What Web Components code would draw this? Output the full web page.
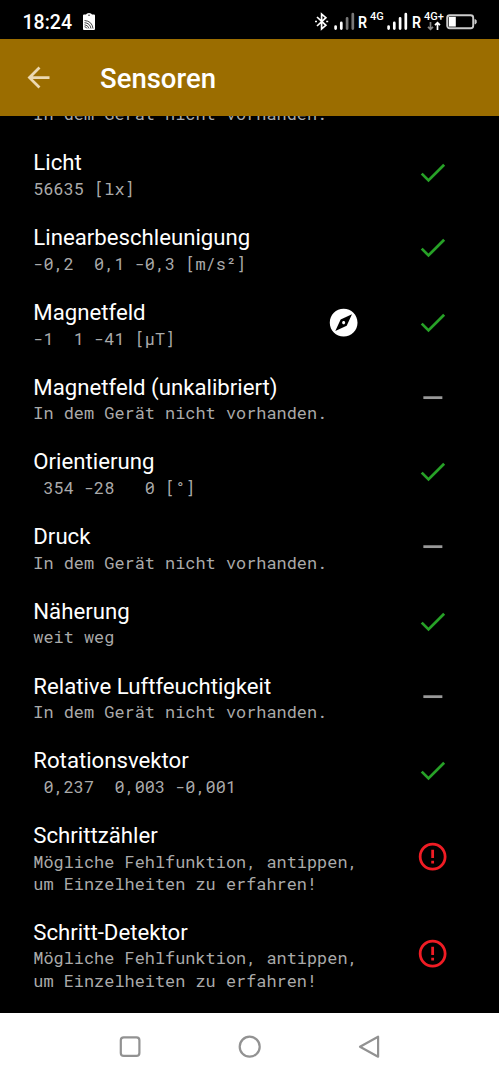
<!DOCTYPE html>
<html lang="de">
<head>
<meta charset="utf-8">
<title>Sensoren</title>
<style>
    body {
        margin: 0;
        background: #000;
        font-family: Roboto, "Open Sans", sans-serif;
        color: #fff;
    }
</style>
</head>
<body>
<sensor-app></sensor-app>

<script>
const signalBars = (dimmed) => `
    <svg class="bars" width="21" height="18" viewBox="0 0 21 18">
        <g stroke-width="2.7" stroke-linecap="round" stroke="#fff">
            <path d="M1.6 14.5V16.6M7.3 10.9V16.6"/>
            <path d="M13.1 6.3V16.6M18.8 2.2V16.6" ${dimmed ? 'stroke="#777"' : ''}/>
        </g>
    </svg>`;

class StatusBar extends HTMLElement {
    constructor() {
        super();
        this.attachShadow({ mode: 'open' });
    }

    connectedCallback() {
        this.shadowRoot.innerHTML = `
            <style>
                :host {
                    display: flex;
                    box-sizing: border-box;
                    height: 39px;
                    padding: 12px 21px 0 22.5px;
                    background: #000;
                    line-height: 1;
                }

                svg { display: block; flex: none; }

                .time {
                    width: 59.5px;
                    font-size: 19.5px;
                    font-weight: 500;
                    line-height: 22px;
                }

                .spacer { flex: 1; }

                .roaming {
                    width: 12px;
                    padding-top: 2px;
                    font-size: 17px;
                    font-weight: 600;
                    transform: scaleX(.84);
                    transform-origin: left;
                }

                .net {
                    display: flex;
                    flex-direction: column;
                    font-size: 11px;
                    font-weight: 500;
                    line-height: 9px;
                }
            </style>
            <span class="time">18:24</span>
            <svg width="14" height="19" viewBox="0 0 14 19">
                <path fill="#fff" d="M2 2.5H4Q4.5 1 7 1T10 2.5H12Q13 2.5 13 3.5V17Q13 18 12 18H2Q1 18 1 17V3.5Q1 2.5 2 2.5Z"/>
                <circle cx="7" cy="3.3" r=".8" fill="#333"/>
                <g fill="none" stroke="#333" stroke-width=".9">
                    <path d="M2.5 8.5Q10 9 11 16.5M2.5 10.7Q8 11 9 16.5M2.5 12.8Q6 13 7 16.5M2.5 14.7Q4.5 15 5 16.5"/>
                </g>
            </svg>
            <span class="spacer"></span>
            <svg width="19" height="19" viewBox="0 0 19 19" fill="none" stroke="#fff" stroke-width="1.7">
                <path d="M2 5L10.9 13.3L6.6 17V2L10.9 5.7L2 14"/>
                <path d="M0 9.5H2M11.2 9.5H13.2"/>
            </svg>
            ${signalBars(true)}
            <span class="roaming" style="margin-left:3.5px">R</span>
            <span class="net" style="width:17px">4G</span>
            ${signalBars(false)}
            <span class="roaming" style="margin-left:4px">R</span>
            <span class="net" style="width:22px">4G+
                <svg width="19" height="10" viewBox="0 0 19 10" fill="none" stroke-width="1.7">
                    <path stroke="#888" d="M6.5 1V8M4 5.8L6.5 8.3L9 5.8"/>
                    <path stroke="#fff" d="M13.5 9V2M11 4.2L13.5 1.7L16 4.2"/>
                </svg>
            </span>
            <svg width="32" height="19" viewBox="0 0 32 19">
                <rect x="1.2" y="3.2" width="26" height="13" rx="2.5" fill="none" stroke="#ccc" stroke-width="1.9"/>
                <rect x="2.8" y="4.8" width="7" height="9.8" fill="#fff"/>
                <path fill="#ccc" d="M28.5 7.2H29.5L30.7 8.6V10.8L29.5 12.2H28.5Z"/>
            </svg>`;
    }
}

class AppBar extends HTMLElement {
    constructor() {
        super();
        this.attachShadow({ mode: 'open' });
    }

    connectedCallback() {
        this.shadowRoot.innerHTML = `
            <style>
                :host {
                    display: flex;
                    align-items: center;
                    box-sizing: border-box;
                    height: 77px;
                    padding: 0 22px;
                    background: #9b6d00;
                }

                svg { display: block; margin-right: 45px; }

                h1 {
                    margin: 2px 0 0;
                    font-size: 27.5px;
                    font-weight: 500;
                    line-height: 32px;
                }
            </style>
            <svg width="33" height="33" viewBox="0 0 24 24">
                <path fill="#ecd9b2" d="M20 11H7.83l5.59-5.59L12 4l-8 8 8 8 1.41-1.41L7.83 13H20v-2z"/>
            </svg>
            <h1><slot></slot></h1>`;
    }
}

const stateIcons = {
    ok: '<path fill="#27a127" d="M9 16.17L4.83 12l-1.42 1.41L9 19 21 7l-1.41-1.41z"/>',
    missing: '<path fill="#999" d="M5.3 11h13.7v2H5.3z"/>',
    error: '<path fill="#f01c24" d="M11 15h2v2h-2zm0-8h2v6h-2zm.99-5C6.47 2 2 6.48 2 12s4.47 10 9.99 10C17.52 22 22 17.52 22 12S17.52 2 11.99 2zM12 20c-4.42 0-8-3.58-8-8s3.58-8 8-8 8 3.58 8 8-3.58 8-8 8z"/>',
    compass: '<path fill="#fff" d="M12 10.9c-.61 0-1.1.49-1.1 1.1s.49 1.1 1.1 1.1c.61 0 1.1-.49 1.1-1.1s-.49-1.1-1.1-1.1zM12 2C6.48 2 2 6.48 2 12s4.48 10 10 10 10-4.48 10-10S17.52 2 12 2zm2.19 12.19L6 18l3.81-8.19L18 6l-3.81 8.19z"/>'
};

class SensorRow extends HTMLElement {
    constructor() {
        super();
        this.attachShadow({ mode: 'open' });
    }

    icon(name) {
        return `<svg width="33.3" height="33.3" viewBox="0 0 24 24">${stateIcons[name]}</svg>`;
    }

    connectedCallback() {
        this.shadowRoot.innerHTML = `
            <style>
                :host {
                    display: flex;
                    align-items: center;
                    flex: none;
                    box-sizing: border-box;
                    padding: 0 50px 0 33.3px;
                }

                .text {
                    flex: 1;
                    padding: 13.3px 0 10.75px;
                }

                .name {
                    min-height: 26px;
                    font-size: 22.2px;
                    line-height: 26px;
                }

                .value {
                    padding-top: 2.6px;
                    font-family: "Roboto Mono", "DejaVu Sans Mono", monospace;
                    font-size: 16.9px;
                    line-height: 22.1px;
                    color: #aaa;
                    white-space: pre;
                }

                .icons { display: flex; gap: 55.5px; padding-bottom: 1px; }

                svg { display: block; }
            </style>
            <div class="text">
                <div class="name"><slot name="name"></slot></div>
                <div class="value"><slot></slot></div>
            </div>
            <div class="icons">
                ${this.hasAttribute('compass') ? this.icon('compass') : ''}
                ${this.icon(this.getAttribute('state'))}
            </div>`;
    }
}

class NavBar extends HTMLElement {
    constructor() {
        super();
        this.attachShadow({ mode: 'open' });
    }

    connectedCallback() {
        this.shadowRoot.innerHTML = `
            <style>
                :host {
                    display: flex;
                    justify-content: center;
                    align-items: center;
                    gap: 95.5px;
                    height: 66.7px;
                    background: #fff;
                }

                svg { fill: none; stroke: #929292; stroke-width: 2.2; }
            </style>
            <svg width="24" height="24"><rect x="2.8" y="2.3" width="18.6" height="18.6" rx="3"/></svg>
            <svg width="24" height="24"><circle cx="11.7" cy="11.7" r="10"/></svg>
            <svg width="24" height="24"><path stroke-linejoin="round" d="M21.1 1.7V21.7L3 11.7Z"/></svg>`;
    }
}

class SensorApp extends HTMLElement {
    constructor() {
        super();
        this.attachShadow({ mode: 'open' });
        const none = 'In dem Gerät nicht vorhanden.';
        const fault = 'Mögliche Fehlfunktion, antippen,\num Einzelheiten zu erfahren!';
        this.sensors = [
            { name: '', value: none, state: 'missing' },
            { name: 'Licht', value: '56635 [lx]', state: 'ok' },
            { name: 'Linearbeschleunigung', value: '-0,2  0,1 -0,3 [m/s²]', state: 'ok' },
            { name: 'Magnetfeld', value: '-1  1 -41 [µT]', state: 'ok', compass: true },
            { name: 'Magnetfeld (unkalibriert)', value: none, state: 'missing' },
            { name: 'Orientierung', value: ' 354 -28   0 [°]', state: 'ok' },
            { name: 'Druck', value: none, state: 'missing' },
            { name: 'Näherung', value: 'weit weg', state: 'ok' },
            { name: 'Relative Luftfeuchtigkeit', value: none, state: 'missing' },
            { name: 'Rotationsvektor', value: ' 0,237  0,003 -0,001', state: 'ok' },
            { name: 'Schrittzähler', value: fault, state: 'error' },
            { name: 'Schritt-Detektor', value: fault, state: 'error' }
        ];
    }

    connectedCallback() {
        let rows = '';
        this.sensors.forEach(s => {
            rows += `<sensor-row state="${s.state}" ${s.compass ? 'compass' : ''}><span slot="name">${s.name}</span>${s.value}</sensor-row>`;
        });

        this.shadowRoot.innerHTML = `
            <style>
                :host {
                    display: flex;
                    flex-direction: column;
                    height: 1080px;
                    overflow: hidden;
                }

                /* scrolled to the end, the first row is cut by the app bar */
                main {
                    display: flex;
                    flex-direction: column;
                    justify-content: flex-end;
                    flex: 1;
                    min-height: 0;
                    overflow: hidden;
                    padding-bottom: 10.9px;
                }
            </style>
            <status-bar></status-bar>
            <app-bar>Sensoren</app-bar>
            <main>${rows}</main>
            <nav-bar></nav-bar>`;
    }
}

customElements.define('status-bar', StatusBar);
customElements.define('app-bar', AppBar);
customElements.define('sensor-row', SensorRow);
customElements.define('nav-bar', NavBar);
customElements.define('sensor-app', SensorApp);
</script>
</body>
</html>
